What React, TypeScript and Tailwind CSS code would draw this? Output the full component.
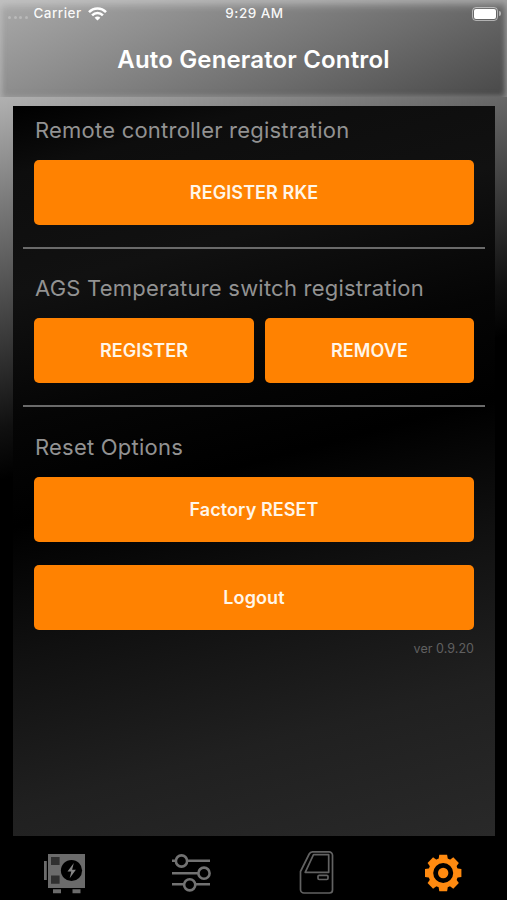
import type { ReactNode } from "react";
import clsx from "clsx";

function StatusBar() {
  return (
    <div className="grid h-[27px] grid-cols-3 items-center pl-2 pr-[6px] text-[13.5px] font-medium leading-none text-white/95">
      <div className="flex items-center">
        <div className="mr-[6px] mt-[8px] flex gap-[2.5px]">
          {[0, 1, 2, 3].map((i) => (
            <span key={i} className="h-[3px] w-[3px] rounded-full bg-white/25" />
          ))}
        </div>
        <span className="tracking-[0.45px]">Carrier</span>
        <svg className="ml-[6px] h-[14px] w-[19px]" viewBox="0 0 19 14" fill="none" stroke="white" strokeWidth="2.5">
          <path d="M1 5.2C5.7 0.2 13.3 0.2 18 5.2" />
          <path d="M4.1 8.3c3-3.2 7.8-3.2 10.8 0" />
          <path d="M9.5 13.6 6.6 10.7c1.6-1.5 4.2-1.5 5.8 0z" fill="white" stroke="none" />
        </svg>
      </div>
      <span className="text-center tracking-[0.5px]">9:29 AM</span>
      <div className="flex items-center justify-end gap-px">
        <div className="h-[14px] w-[26px] rounded-[4px] border border-white/50 p-[1px]">
          <div className="h-full w-full rounded-[2px] bg-white" />
        </div>
        <span className="h-[5px] w-[2px] rounded-r-full bg-white/50" />
      </div>
    </div>
  );
}

function Section({ title, children }: { title: string; children: ReactNode }) {
  return (
    <section className="px-[11px]">
      <h2 className="pl-[1px] text-[22px] leading-[28px] tracking-[0.22px] text-[#929292]">{title}</h2>
      {children}
    </section>
  );
}

function ActionButton({ label, className }: { label: string; className?: string }) {
  return (
    <button
      type="button"
      className={clsx(
        "h-[65px] rounded-[5px] bg-[#ff8201] text-[18px] font-semibold tracking-[0.1px] text-[#fff6e9]",
        className
      )}
    >
      {label}
    </button>
  );
}

function GeneratorIcon() {
  return (
    <svg className="h-12 w-12" viewBox="0 0 48 48" fill="#6b6b6b">
      <path d="M7 6h37v34H7z" />
      <path d="M3 13h2.8v19H3zM12 41.2h8v4h-8zM31.5 41.2h8v4h-8z" />
      <path d="M10 9h8.6v8H10zM10 27.5h8.6v8.2H10z" fill="#303030" />
      <circle cx="30.5" cy="22.5" r="10.6" fill="#000" />
      <path d="m32.8 15-6.3 8.5h3.8l-1.6 6.8 6.2-8.6h-3.8z" fill="#858585" />
    </svg>
  );
}

function SlidersIcon() {
  return (
    <svg className="h-12 w-12" viewBox="0 0 48 48" fill="none" stroke="#727272" strokeWidth="2.6">
      <path d="M5 12.8h4M20.3 12.8H43M5 25.2h26M5 36.3h12M28 36.3h15" />
      <circle cx="14.5" cy="13" r="5.6" />
      <circle cx="37" cy="25.2" r="5.6" />
      <circle cx="22.7" cy="36.8" r="5.6" />
    </svg>
  );
}

function DoorIcon() {
  return (
    <svg className="h-12 w-12" viewBox="0 0 48 48" fill="none" stroke="#626262" strokeWidth="1.7" strokeLinejoin="round">
      <path d="M20.5 3.8H37a3.5 3.5 0 0 1 3.5 3.5V42a3 3 0 0 1-3 3H12a3.5 3.5 0 0 1-3.5-3.5V23.5L17.2 6a4 4 0 0 1 3.3-2.2Z" />
      <path d="M21.5 6.7h15.2v17.6H13.2Z" />
      <rect x="26" y="27.3" width="10" height="4.2" rx="1.2" />
    </svg>
  );
}

function GearIcon() {
  return (
    <svg className="h-12 w-12" viewBox="0 0 48 48" fill="#ff8a10">
      <circle cx="25.2" cy="25" r="12.5" fill="none" stroke="#ff8a10" strokeWidth="5" />
      <circle cx="25.2" cy="25" r="5.2" />
      {[0, 45, 90, 135, 180, 225, 270, 315].map((deg) => (
        <path key={deg} d="M21.3 6.8h7.8l.9 5.2h-9.6z" transform={`rotate(${deg} 25.2 25)`} />
      ))}
    </svg>
  );
}

const TABS = [
  { id: "generator", Icon: GeneratorIcon },
  { id: "controls", Icon: SlidersIcon },
  { id: "door", Icon: DoorIcon },
  { id: "settings", Icon: GearIcon },
];

export default function App() {
  return (
    <div className="flex h-[900px] w-[507px] flex-col overflow-hidden bg-[linear-gradient(164deg,#d4d4d4_0%,#adadad_10%,#777_20%,#3c3c3c_32%,#101010_41%,#000_46%)] font-['Inter','Liberation_Sans',sans-serif]">
      <header className="h-[97px] shrink-0 bg-[linear-gradient(157deg,#aaa_0%,#8e8e8e_30%,#6c6c6c_65%,#484848_100%)] shadow-[inset_0_5px_7px_1px_rgba(255,255,255,0.28),inset_0_0_5px_2px_rgba(170,170,170,0.35)]">
        <StatusBar />
        <h1 className="mt-[17px] text-center text-[24px] font-semibold leading-[32px] tracking-[0.15px] text-white">
          Auto Generator Control
        </h1>
      </header>

      <main className="ml-[13px] mt-[9px] h-[730px] w-[482px] shrink-0 bg-[linear-gradient(165deg,#000_0%,#0d0d0d_8%,#111_22%,#050505_37%,#000_49%,#101010_64%,#202020_82%,#292929_100%)] px-[10px] pt-[10px]">
        <Section title="Remote controller registration">
          <ActionButton label="REGISTER RKE" className="mt-4 w-[440px]" />
        </Section>
        <hr className="mb-[25px] mt-[22px] border-t-2 border-[#6a6a6a]" />
        <Section title="AGS Temperature switch registration">
          <div className="mt-4 flex w-[440px] gap-[11px]">
            <ActionButton label="REGISTER" className="w-[220px]" />
            <ActionButton label="REMOVE" className="w-[209px]" />
          </div>
        </Section>
        <hr className="mb-[26px] mt-[22px] border-t-2 border-[#6a6a6a]" />
        <Section title="Reset Options">
          <div className="mt-[15.5px] flex w-[440px] flex-col gap-[23px]">
            <ActionButton label="Factory RESET" />
            <ActionButton label="Logout" />
          </div>
          <p className="mt-[10px] w-[440px] text-right text-[12.5px] leading-[18px] tracking-[0.05px] text-[#606060]">ver 0.9.20</p>
        </Section>
      </main>

      <nav className="grid h-[64px] grid-cols-4 bg-black px-[2px] pt-3">
        {TABS.map(({ id, Icon }) => (
          <button key={id} type="button" aria-label={id} className="flex items-start justify-center">
            <Icon />
          </button>
        ))}
      </nav>
    </div>
  );
}
